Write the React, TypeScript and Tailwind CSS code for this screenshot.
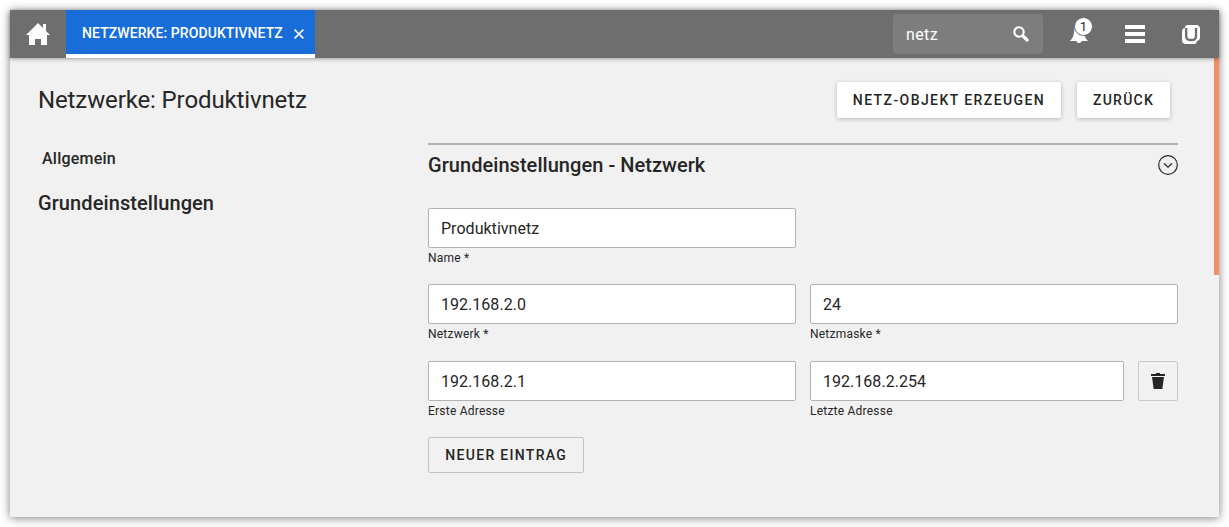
import React from "react";

function Field({ value, label, className }: { value: string; label: string; className: string }) {
  return (
    <label className={`flex flex-col ${className}`}>
      <input
        defaultValue={value}
        className="h-10 w-full rounded-xs border border-[#b3b3b3] bg-white px-3 pt-0.5 text-[16px] tracking-[0.03px] text-[#262626] outline-none"
      />
      <span className="mt-px text-[12px] leading-[18px] tracking-[0.22px]">{label}</span>
    </label>
  );
}

function HomeIcon() {
  return (
    <svg width="24" height="22" viewBox="0 0 24 22" fill="#fff" aria-hidden="true">
      <path d="M12 0 0 12h3v10h6v-6h6v6h6V12h3l-4-4V1h-3v4z" />
    </svg>
  );
}

function Header() {
  return (
    <header className="relative z-10 flex h-12 shrink-0 items-stretch bg-[#6e6e6e] text-white shadow-[0_1px_4px_rgba(0,0,0,0.35)]">
      <button className="flex w-14 items-center justify-center" aria-label="Home">
        <HomeIcon />
      </button>
      <div className="flex w-[249px] items-center border-b-4 border-white bg-[#186dd9] pt-0.5 pl-4">
        <span className="w-[202px] text-[14px] font-medium tracking-[0.08px] whitespace-nowrap">NETZWERKE: PRODUKTIVNETZ</span>
        <svg className="mt-0.5 ml-[10px]" width="10" height="10" viewBox="0 0 10 10" fill="none" stroke="#fff" strokeWidth="1.5">
          <path d="M.6.6 9.4 9.4M9.4.6.6 9.4" />
        </svg>
      </div>
      <div className="mt-1 ml-auto flex h-10 w-[150px] items-center justify-between rounded-[4px] bg-[#7d7d7d] pr-[14px] pl-[13px]">
        <span className="pt-0.5 text-[16px] tracking-[0.4px]">netz</span>
        <svg width="16" height="16" viewBox="0 0 16 16" fill="none" stroke="#fff" aria-hidden="true">
          <circle cx="6" cy="6" r="4.7" strokeWidth="2.1" />
          <path d="m9.2 9.2 1.3 1.3" strokeWidth="2" />
          <path d="m10.8 10.8 3.2 3.1" strokeWidth="3.4" strokeLinecap="round" />
        </svg>
      </div>
      <button className="relative ml-[26px] flex w-5 items-start pt-[9px]" aria-label="Benachrichtigungen">
        <svg className="ml-px" width="18" height="25" viewBox="0 0 18 25" fill="#fff">
          <path d="M9 2C5.5 2 4.6 7 4.2 12c-.3 4.500-1.600 7.300-4.200 10h6.200a3 3 0 0 0 5.600 0H18c-2.600-2.700-3.900-5.500-4.200-10C13.400 7 12.500 2 9 2z" />
        </svg>
        <span className="absolute top-[7px] left-[5px] flex h-[19px] w-[19px] items-center justify-center rounded-full border border-[#6e6e6e] bg-white text-[13px] leading-none text-[#262626]">
          1
        </span>
      </button>
      <button className="ml-9 flex w-5 items-center" aria-label="Menü">
        <svg width="20" height="18" viewBox="0 0 20 18" fill="#fff">
          <path d="M0 0h20v4H0zM0 7h20v4H0zM0 14h20v4H0z" />
        </svg>
      </button>
      <button className="mr-[19px] ml-[37px] flex w-[18px] items-center" aria-label="Univention">
        <svg width="18" height="19" viewBox="0 0 18 19">
          <path d="M5.500 0H14a4 4 0 0 1 4 4v8.500a3.500 3.500 0 0 1-3 3.400A3.500 3.500 0 0 1 11.500 19H4a4 4 0 0 1-4-4V6.500A3.500 3.500 0 0 1 3 3.100V2.500A2.500 2.500 0 0 1 5.500 0z" fill="#fff" />
          <path d="M4.200 3v8q0 4 3.800 4h2.200q3.800 0 3.800-4V3" fill="none" stroke="#6e6e6e" strokeWidth="2.300" />
        </svg>
      </button>
    </header>
  );
}

function ActionButton({ children, className }: { children: React.ReactNode; className: string }) {
  return (
    <button
      className={`flex h-9 items-center justify-center rounded-xs bg-white text-[14px] font-medium whitespace-nowrap shadow-[0_1px_4px_rgba(0,0,0,0.25)] ${className}`}
    >
      {children}
    </button>
  );
}

export default function App() {
  return (
    <div className="h-[527px] w-[1229px] bg-white p-[10px] font-['Roboto',sans-serif] text-[#262626]">
      <div className="flex h-[507px] flex-col bg-[#f1f1f1] shadow-[0_1px_9px_rgba(0,0,0,0.5)]">
        <Header />
        <div className="flex flex-1">
          <main className="flex flex-1 flex-col pl-7">
            <div className="flex h-[85px] items-start pt-6">
              <h1 className="text-[24px] leading-9 tracking-[-0.12px]">Netzwerke: Produktivnetz</h1>
              <div className="mr-11 ml-auto flex gap-4">
                <ActionButton className="w-[224px] tracking-[1.42px]">NETZ-OBJEKT ERZEUGEN</ActionButton>
                <ActionButton className="w-[93px] tracking-[1.25px]">ZURÜCK</ActionButton>
              </div>
            </div>
            <div className="flex">
              <nav className="flex w-[390px] flex-col">
                <a className="pt-1 pl-1 text-[16px] leading-6 font-medium tracking-[0.23px]">Allgemein</a>
                <a className="mt-[17px] text-[20px] leading-[30px] font-medium tracking-[0.09px]">Grundeinstellungen</a>
              </nav>
              <section className="w-[750px] border-t-2 border-[#b3b3b3]">
                <div className="flex h-[62.6px] items-start justify-between pt-[5px]">
                  <h2 className="text-[20px] leading-[30px] font-medium tracking-[0.05px]">Grundeinstellungen - Netzwerk</h2>
                  <svg className="mt-[5px]" width="20" height="20" viewBox="0 0 20 20" fill="none" stroke="#262626">
                    <circle cx="10" cy="10" r="9.3" strokeWidth="1.2" />
                    <path d="m6 8.500 4 3.700 4-3.700" strokeWidth="1.300" />
                  </svg>
                </div>
                <div className="flex h-[76.4px]">
                  <Field value="Produktivnetz" label="Name *" className="w-[368px]" />
                </div>
                <div className="flex h-[76.6px] gap-[14px]">
                  <Field value="192.168.2.0" label="Netzwerk *" className="w-[368px]" />
                  <Field value="24" label="Netzmaske *" className="w-[368px]" />
                </div>
                <div className="flex h-[76.4px] gap-[14px]">
                  <Field value="192.168.2.1" label="Erste Adresse" className="w-[368px]" />
                  <Field value="192.168.2.254" label="Letzte Adresse" className="w-[314px]" />
                  <button className="flex h-10 w-10 items-center justify-center rounded-xs border border-[#c9c9c9]" aria-label="Entfernen">
                    <svg width="14" height="16" viewBox="0 0 14 16" fill="#262626">
                      <path d="M0 1h5V0h4v1h5v2H0zM1 4h12l-1.700 12H2.700z" />
                    </svg>
                  </button>
                </div>
                <button className="flex h-9 w-[156.4px] items-center justify-center rounded-xs border border-[#c4c4c4] pt-px text-[14px] font-medium tracking-[1.3px] whitespace-nowrap">
                  NEUER EINTRAG
                </button>
              </section>
            </div>
          </main>
          <div className="w-[5px]">
            <div className="h-[216.5px] bg-[#f38f67]" />
          </div>
        </div>
      </div>
    </div>
  );
}
